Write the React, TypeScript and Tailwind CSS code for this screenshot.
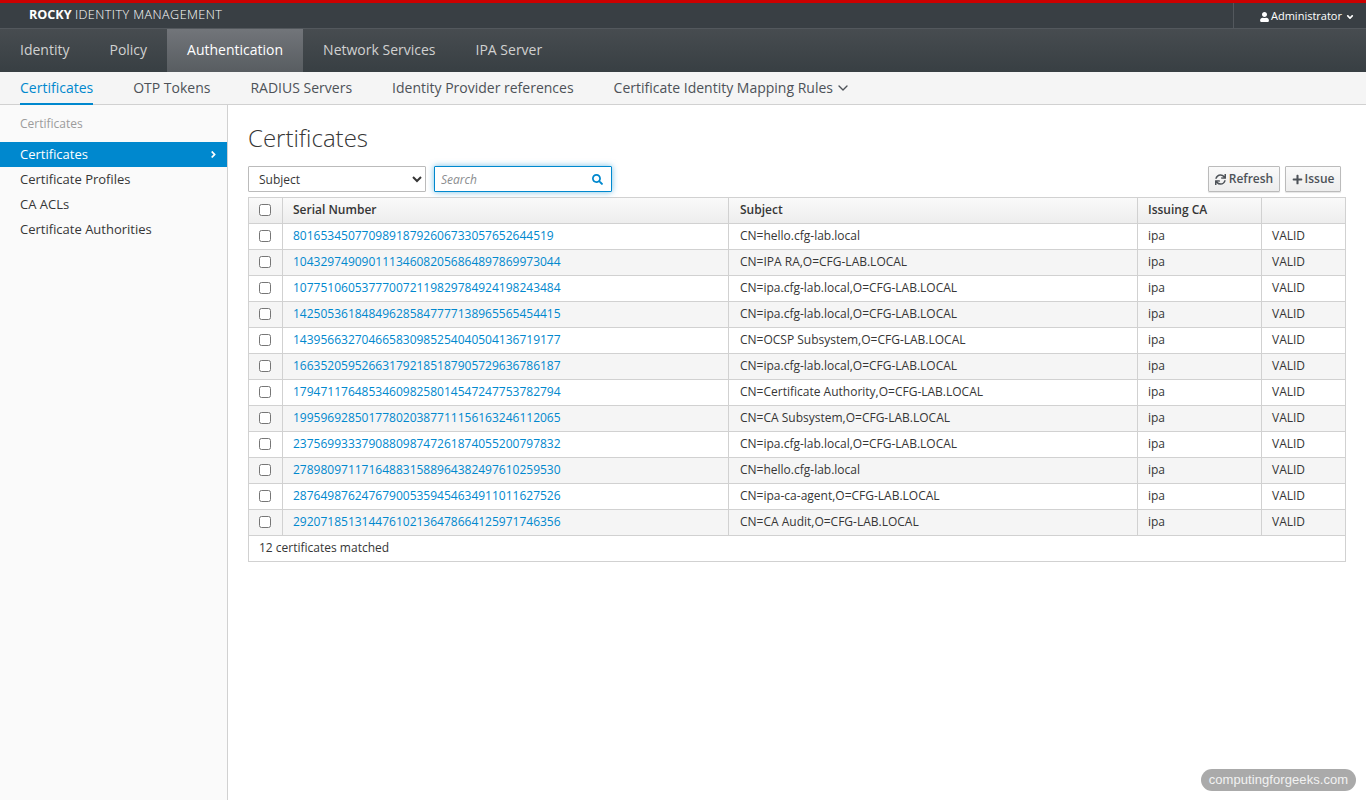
import { ChevronDown } from 'lucide-react';
import { FaAngleDown, FaAngleRight, FaPlus, FaSearch, FaSync, FaUser } from 'react-icons/fa';

const certs = [
  ['80165345077098918792606733057652644519', 'CN=hello.cfg-lab.local'],
  ['104329749090111346082056864897869973044', 'CN=IPA RA,O=CFG-LAB.LOCAL'],
  ['107751060537770072119829784924198243484', 'CN=ipa.cfg-lab.local,O=CFG-LAB.LOCAL'],
  ['142505361848496285847777138965565454415', 'CN=ipa.cfg-lab.local,O=CFG-LAB.LOCAL'],
  ['143956632704665830985254040504136719177', 'CN=OCSP Subsystem,O=CFG-LAB.LOCAL'],
  ['166352059526631792185187905729636786187', 'CN=ipa.cfg-lab.local,O=CFG-LAB.LOCAL'],
  ['179471176485346098258014547247753782794', 'CN=Certificate Authority,O=CFG-LAB.LOCAL'],
  ['199596928501778020387711156163246112065', 'CN=CA Subsystem,O=CFG-LAB.LOCAL'],
  ['237569933379088098747261874055200797832', 'CN=ipa.cfg-lab.local,O=CFG-LAB.LOCAL'],
  ['278980971171648831588964382497610259530', 'CN=hello.cfg-lab.local'],
  ['287649876247679005359454634911011627526', 'CN=ipa-ca-agent,O=CFG-LAB.LOCAL'],
  ['292071851314476102136478664125971746356', 'CN=CA Audit,O=CFG-LAB.LOCAL'],
];

const mainNav = ['Identity', 'Policy', 'Authentication', 'Network Services', 'IPA Server'];
const sideNav = ['Certificates', 'Certificate Profiles', 'CA ACLs', 'Certificate Authorities'];

function Checkbox() {
  return <input type="checkbox" className="block w-[12px] h-[12px] m-0" />;
}

export default function App() {
  return (
    <div className="relative h-[800px] w-[1366px] overflow-hidden flex flex-col bg-white text-[#363636] text-[12px] font-['Open_Sans',sans-serif]">
      <header className="h-[28px] shrink-0 flex items-stretch justify-between border-t-[3px] border-[#cc0000] bg-[#393f44] text-white">
        <div className="pl-[29px] flex items-center text-[12.6px]">
          <span className="font-bold">ROCKY</span>&nbsp;<span className="font-light tracking-[0.44px]">IDENTITY MANAGEMENT</span>
        </div>
        <div className="w-[133px] border-l border-[#53585d] flex items-center pt-[2px] pl-[26px] gap-[2px] text-[11px]">
          <FaUser className="w-[9px] h-[10px]" />
          <span>Administrator</span>
          <FaAngleDown className="w-[10px] h-[10px] ml-[1px]" />
        </div>
      </header>
      <nav className="h-[44px] shrink-0 flex border-t border-[#53585d] bg-gradient-to-b from-[#474c50] to-[#383f43] text-[14px] text-[#d1d1d1]">
        {mainNav.map((item) =>
          item === 'Authentication' ? (
            <div key={item} className="px-[20px] pb-[2px] flex items-center text-white bg-gradient-to-b from-[#72757a] to-[#585d61]">
              {item}
            </div>
          ) : (
            <div key={item} className="px-[20px] pb-[2px] flex items-center">
              {item}
            </div>
          ),
        )}
      </nav>
      <nav className="h-[33px] shrink-0 flex gap-[40px] pl-[20px] bg-[#f5f5f5] border-b border-[#d1d1d1] text-[14px] text-[#4d5258]">
        <div className="flex items-center text-[#0088ce] border-b-2 border-[#0088ce] h-[33px] pb-[1px]">Certificates</div>
        <div className="flex items-center pb-[2px]">OTP Tokens</div>
        <div className="flex items-center pb-[2px]">RADIUS Servers</div>
        <div className="flex items-center pb-[2px]">Identity Provider references</div>
        <div className="flex items-center gap-[2px] pb-[2px]">
          Certificate Identity Mapping Rules
          <ChevronDown className="w-[16px] h-[16px] mt-[2px]" strokeWidth={2} />
        </div>
      </nav>
      <div className="flex flex-1 min-h-0">
        <aside className="w-[228px] shrink-0 bg-[#fafafa] border-r border-[#d1d1d1]">
          <div className="h-[37px] pl-[20px] flex items-center text-[#9c9c9c]">Certificates</div>
          {sideNav.map((item, i) =>
            i === 0 ? (
              <div key={item} className="h-[25px] pl-[20px] pr-[8px] flex items-center justify-between bg-[#0088ce] text-white text-[13px]">
                {item}
                <FaAngleRight className="w-[11px] h-[11px]" />
              </div>
            ) : (
              <div key={item} className="h-[25px] pl-[20px] flex items-center text-[13px] text-[#363636]">
                {item}
              </div>
            ),
          )}
        </aside>
        <main className="flex-1 pl-[20px] pr-[20px]">
          <h1 className="pt-[16px] h-[61px] text-[24px] leading-[34px] font-light text-[#363636]">Certificates</h1>
          <div className="h-[26px] flex items-center">
            <select className="w-[178px] h-[26px] pl-[6px] pr-[4px] border border-[#bbbbbb] rounded-[1px] bg-white text-[#363636]">
              <option>Subject</option>
            </select>
            <div className="ml-[8px] w-[178px] h-[26px] pl-[6px] pr-[8px] flex items-center justify-between border border-[#0088ce] rounded-[1px] bg-white shadow-[0_0_6px_rgba(0,136,206,0.55)]">
              <input
                placeholder="Search"
                className="w-[140px] pt-[1px] outline-none bg-transparent placeholder:italic placeholder:text-[#8b8d8f]"
              />
              <FaSearch className="w-[11px] h-[11px] text-[#0088ce]" />
            </div>
            <div className="ml-auto flex gap-[5px] mr-[5px] font-semibold text-[#4d5258]">
              <button className="h-[26px] w-[72px] flex items-center justify-center gap-[3px] border border-[#bbbbbb] rounded-[1px] bg-gradient-to-b from-[#fafafa] to-[#ededed] shadow-[0_1px_1px_rgba(0,0,0,0.1)]">
                <FaSync className="w-[11px] h-[11px]" />
                Refresh
              </button>
              <button className="h-[26px] w-[56px] flex items-center justify-center gap-[2px] border border-[#bbbbbb] rounded-[1px] bg-gradient-to-b from-[#fafafa] to-[#ededed] shadow-[0_1px_1px_rgba(0,0,0,0.1)]">
                <FaPlus className="w-[11px] h-[11px]" />
                Issue
              </button>
            </div>
          </div>
          <table className="mt-[5px] w-[1097px] table-fixed border-collapse">
            <colgroup>
              <col className="w-[34px]" />
              <col className="w-[446px]" />
              <col className="w-[409px]" />
              <col className="w-[124px]" />
              <col className="w-[84px]" />
            </colgroup>
            <thead>
              <tr className="h-[26px] bg-gradient-to-b from-[#fafafa] to-[#ededed] text-left font-semibold">
                <th className="border border-[#d1d1d1] pl-[10px] pb-[2px]"><Checkbox /></th>
                <th className="border border-[#d1d1d1] pl-[10px] pb-[2px] font-semibold">Serial Number</th>
                <th className="border border-[#d1d1d1] pl-[11px] pb-[2px] font-semibold">Subject</th>
                <th className="border border-[#d1d1d1] pl-[10px] pb-[2px] font-semibold">Issuing CA</th>
                <th className="border border-[#d1d1d1]" />
              </tr>
            </thead>
            <tbody>
              {certs.map(([serial, subject], i) => (
                <tr key={serial} className={i % 2 ? 'h-[26px] bg-[#f5f5f5]' : 'h-[26px] bg-white'}>
                  <td className="border border-[#d1d1d1] pl-[10px] pb-[2px]"><Checkbox /></td>
                  <td className="border border-[#d1d1d1] pl-[10px] pb-[2px] text-[#0088ce]">{serial}</td>
                  <td className="border border-[#d1d1d1] pl-[11px] pb-[2px]">{subject}</td>
                  <td className="border border-[#d1d1d1] pl-[10px] pb-[2px]">ipa</td>
                  <td className="border border-[#d1d1d1] pl-[10px] pb-[2px]">VALID</td>
                </tr>
              ))}
            </tbody>
            <tfoot>
              <tr className="h-[26px]">
                <td colSpan={5} className="border border-[#d1d1d1] pl-[10px] pb-[2px]">12 certificates matched</td>
              </tr>
            </tfoot>
          </table>
        </main>
      </div>
      <div className="absolute left-[1201px] top-[769px] h-[22px] w-[155px] rounded-full bg-[#aaaaaa] text-[#f2f2f2] text-[13px] tracking-[0.07px] flex items-center justify-center font-['Liberation_Sans',sans-serif]">
        computingforgeeks.com
      </div>
    </div>
  );
}
